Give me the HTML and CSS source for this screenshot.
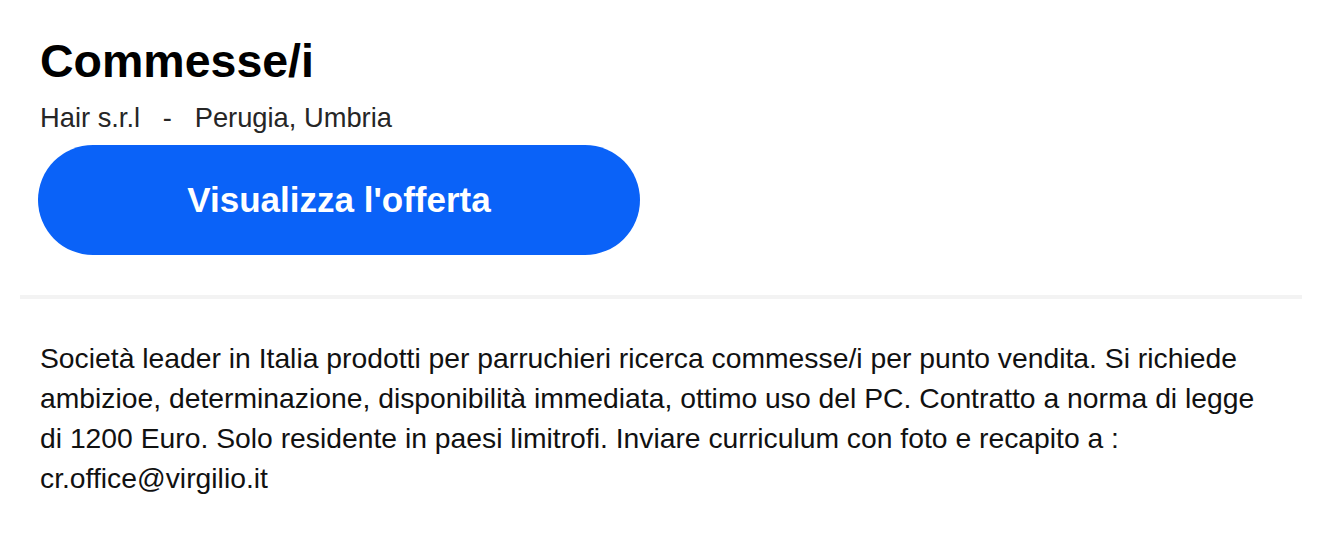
FILE: index.html
```html
<!DOCTYPE html>
<html lang="it">
<head>
<meta charset="utf-8">
<title>Commesse/i</title>
<link rel="stylesheet" href="styles.css">
</head>
<body>
<div class="page">
  <header class="head">
    <h1 class="title">Commesse/i</h1>
    <p class="meta">Hair s.r.l &nbsp;&nbsp;-&nbsp;&nbsp; Perugia, Umbria</p>
    <a class="cta" href="#">Visualizza l'offerta</a>
  </header>
  <hr class="divider">
  <section class="desc">
    <p>Società leader in Italia prodotti per parruchieri ricerca commesse/i per punto vendita. Si richiede ambizioe, determinazione, disponibilità immediata, ottimo uso del PC. Contratto a norma di legge di 1200 Euro. Solo residente in paesi limitrofi. Inviare curriculum con foto e recapito a : cr.office@virgilio.it</p>
  </section>
</div>
</body>
</html>
```

FILE: styles.css
```css
* { box-sizing: border-box; }
html, body { margin: 0; padding: 0; background: #ffffff; }
body { font-family: "Liberation Sans", Arial, Helvetica, sans-serif; color: #111111; }
.page { margin: 0 18px 0 20px; }
.head { padding: 35px 20px 0 20px; display: flex; flex-direction: column; align-items: flex-start; }
.title { margin: 0; font-size: 46.5px; line-height: 52px; font-weight: 700; color: #000; }
.meta { margin: 16px 0 0 0; font-size: 27.3px; line-height: 30px; color: #262626; }
.cta {
  margin: 12px 0 0 -2px;
  width: 602px; height: 110px;
  border-radius: 55px;
  background: #0a62f8;
  color: #ffffff;
  font-size: 35px; font-weight: 700;
  text-decoration: none;
  display: flex; align-items: center; justify-content: center;
}
.divider { margin: 40px 0 0 0; border: 0; height: 4px; background: #f3f3f3; }
.desc { padding: 39px 40px 0 20px; }
.desc p { margin: 0; font-size: 28.3px; line-height: 40px; color: #111; }
```
